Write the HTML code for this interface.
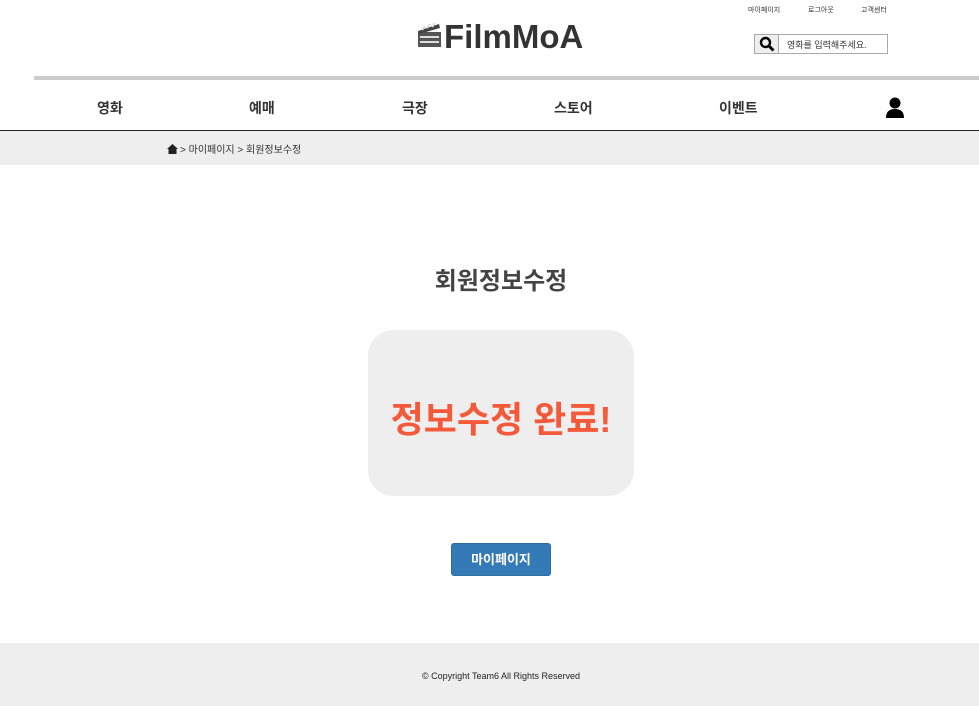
<!DOCTYPE html>
<html><head><meta charset="utf-8"><style>
*{margin:0;padding:0;box-sizing:border-box}
body{width:979px;height:706px;position:relative;background:#fff;font-family:"Liberation Sans","Noto Sans CJK KR",sans-serif;color:#222;overflow:hidden}
.a{position:absolute}
.top{font-size:7px;color:#333;top:5px}
.nav{top:98px;font-size:14px;font-weight:bold;color:#333}
</style></head><body>
<div class="a top" style="left:748px">마이페이지</div>
<div class="a top" style="left:808px">로그아웃</div>
<div class="a top" style="left:861px">고객센터</div>
<svg class="a" style="left:417px;top:21px" width="26" height="28" viewBox="0 0 26 28"><rect x="1" y="11" width="23" height="15" fill="#555"/><rect x="3" y="15" width="19" height="2" fill="#ddd"/><rect x="3" y="20" width="19" height="2" fill="#ddd"/><path d="M1 10 L22 3 L23 7 L2 13Z" fill="#444"/><path d="M5 9 l3-4 M10 7 l3-4 M15 6 l3-4" stroke="#ddd" stroke-width="2"/></svg>
<div class="a" style="left:444px;top:18px;font-size:33px;font-weight:bold;color:#333">FilmMoA</div>
<div class="a" style="left:754px;top:34px;width:134px;height:20px;border:1px solid #aaa;background:#fff"></div>
<div class="a" style="left:755px;top:35px;width:24px;height:18px;background:#eee;border-right:1px solid #aaa"></div>
<svg class="a" style="left:759px;top:36px" width="16" height="16" viewBox="0 0 16 16"><circle cx="6.5" cy="6.5" r="4.5" fill="none" stroke="#000" stroke-width="2.4"/><path d="M10 10 L14.5 14.5" stroke="#000" stroke-width="3"/></svg>
<div class="a" style="left:787px;top:38px;font-size:9px;color:#333">영화를 입력해주세요.</div>
<div class="a" style="left:34px;top:76px;width:945px;height:4px;background:#ccc"></div>
<div class="a nav" style="left:97px">영화</div>
<div class="a nav" style="left:249px">예매</div>
<div class="a nav" style="left:402px">극장</div>
<div class="a nav" style="left:554px">스토어</div>
<div class="a nav" style="left:719px">이벤트</div>
<svg class="a" style="left:885px;top:97px" width="20" height="22" viewBox="0 0 20 22"><circle cx="10" cy="6" r="5.5" fill="#000"/><path d="M1 21 Q1 12 10 12 Q19 12 19 21Z" fill="#000"/></svg>
<div class="a" style="left:0;top:130px;width:979px;height:35px;background:#eee;border-top:1px solid #222"></div>
<svg class="a" style="left:167px;top:144px" width="11" height="10" viewBox="0 0 11 10"><path d="M0 5 L5.5 0 L11 5 H9.5 V10 H1.5 V5Z" fill="#222"/></svg>
<div class="a" style="left:180px;top:141px;font-size:10px;color:#333">&gt; 마이페이지 &gt; 회원정보수정</div>
<div class="a" style="left:0;top:261px;width:1002px;text-align:center;font-size:24px;font-weight:bold;color:#444">회원정보수정</div>
<div class="a" style="left:368px;top:330px;width:266px;height:166px;background:#eee;border-radius:26px"></div>
<div class="a" style="left:368px;top:391px;width:266px;text-align:center;font-size:36px;font-weight:bold;color:#f4593a;white-space:nowrap">정보수정 완료!</div>
<div class="a" style="left:451px;top:543px;width:100px;height:33px;background:#337ab7;border:1px solid #2e6da4;border-radius:3px;color:#fff;font-size:13px;font-weight:bold;text-align:center;line-height:31px">마이페이지</div>
<div class="a" style="left:0;top:643px;width:979px;height:63px;background:#eee"></div>
<div class="a" style="left:0;top:671px;width:1002px;text-align:center;font-size:9px;color:#222">© Copyright Team6 All Rights Reserved</div>
</body></html>
